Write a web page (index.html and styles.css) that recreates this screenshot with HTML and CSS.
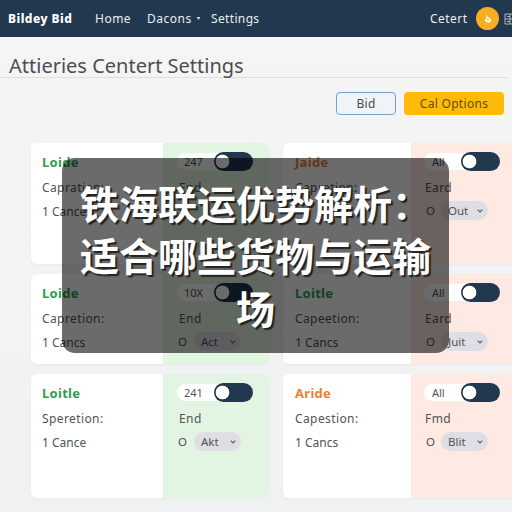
FILE: index.html
```
<!DOCTYPE html>
<html lang="en">
<head>
<meta charset="utf-8">
<title>Attieries Centert Settings</title>
<link rel="stylesheet" href="styles.css">
</head>
<body>
<nav class="nav">
  <span class="brand">Bildey Bid</span>
  <span class="home">Home</span>
  <span class="menu">Dacons</span>
  <svg class="caret" viewBox="0 0 5 5"><path d="M.5 1h4L2.5 4z" fill="#cbd5de"/></svg>
  <span class="settings">Settings</span>
  <span class="account">Cetert</span>
  <span class="avatar"><svg viewBox="0 0 23 23"><path d="M10 7.5l2 2.5 3 2.2v2.6l-2.3 1-2.8-.8-1.4-1.7 1.8-2z" fill="#fff8df"/><path d="M11 12.3l2 .7" stroke="#f9ad20"/></svg></span>
  <svg class="grid-icon" viewBox="0 0 12 12"><path d="M1 1h10v10H1zM1 6h10M6 1v10M3 3.5h3M3 8.5h3" fill="none" stroke="#a9b9c8" stroke-width="1"/></svg>
</nav>
<h1>Attieries Centert Settings</h1>
<div class="actions"><button class="bid">Bid</button><button class="options">Cal Options</button></div>
<main class="cards">
  <section class="card green">
    <div class="info"><h2>Loide</h2><p class="label">Capration:</p><p>1 Cances</p></div>
    <div class="side"><div class="switch"><span>247</span><i></i></div><p>End</p></div>
  </section>
  <section class="card peach">
    <div class="info"><h2 class="orange">Jaide</h2><p class="label">Capretion:</p></div>
    <div class="side"><div class="switch"><span>All</span><i></i></div><p>Eard</p><div class="pick"><b>O</b><span class="select">Out<svg viewBox="0 0 6 4"><path d="M.7.7L3 3 5.3.7"/></svg></span></div></div>
  </section>
  <section class="card green">
    <div class="info"><h2>Loide</h2><p class="label">Capretion:</p><p>1 Cancs</p></div>
    <div class="side"><div class="switch"><span>10X</span><i></i></div><p>End</p><div class="pick"><b>O</b><span class="select">Act<svg viewBox="0 0 6 4"><path d="M.7.7L3 3 5.3.7"/></svg></span></div></div>
  </section>
  <section class="card peach">
    <div class="info"><h2>Loitle</h2><p class="label">Capeetion:</p><p>1 Cancs</p></div>
    <div class="side"><div class="switch"><span>All</span><i></i></div><p>Eard</p><div class="pick"><b>O</b><span class="select">Juit<svg viewBox="0 0 6 4"><path d="M.7.7L3 3 5.3.7"/></svg></span></div></div>
  </section>
  <section class="card green">
    <div class="info"><h2>Loitle</h2><p class="label">Speretion:</p><p>1 Cance</p></div>
    <div class="side"><div class="switch"><span>241</span><i></i></div><p>End</p><div class="pick"><b>O</b><span class="select">Akt<svg viewBox="0 0 6 4"><path d="M.7.7L3 3 5.3.7"/></svg></span></div></div>
  </section>
  <section class="card peach">
    <div class="info"><h2 class="orange">Aride</h2><p class="label">Capestion:</p><p>1 Cancs</p></div>
    <div class="side"><div class="switch"><span>All</span><i></i></div><p>Fmd</p><div class="pick"><b>O</b><span class="select">Blit<svg viewBox="0 0 6 4"><path d="M.7.7L3 3 5.3.7"/></svg></span></div></div>
  </section>
</main>
<div class="overlay" lang="zh-CN"><div>铁海联运优势解析：</div><div>适合哪些货物与运输</div><div>场</div></div>
</body>
</html>
```
FILE: styles.css
```
* { box-sizing: border-box; }
body {
  margin: 0;
  width: 512px;
  height: 512px;
  overflow: hidden;
  position: relative;
  background: linear-gradient(#f5f5f5, #f4f4f5 30%, #eff1f3);
  color: #505357;
  font-family: "Noto Sans", "Noto Sans CJK SC", sans-serif;
}
.nav {
  height: 37px;
  padding-left: 8px;
  display: flex;
  align-items: center;
  background: #22384f;
  color: #e9eef2;
  font-size: 12px;
  white-space: nowrap;
}
.nav > * { flex: none; }
.nav span { line-height: 38px; }
.brand { width: 87px; font-weight: 800; color: #fff; letter-spacing: .45px; }
.home { width: 52px; letter-spacing: .5px; }
.menu { width: 49px; letter-spacing: .5px; }
.caret { width: 5px; height: 5px; margin-right: 10px; }
.settings { width: 219px; letter-spacing: .35px; }
.account { width: 46px; letter-spacing: .45px; }
.avatar { width: 23px; height: 23px; border-radius: 50%; background: #f9ad20; display: flex; }
.avatar svg { width: 23px; height: 23px; }
.grid-icon { width: 12px; height: 12px; margin-left: 5px; }
h1 {
  margin: 0 4px 0 0;
  height: 41px;
  padding: 15px 0 0 9px;
  border-bottom: 1px solid #dfdfe1;
  font-size: 20px;
  line-height: 28px;
  font-weight: 400;
  letter-spacing: 0;
  color: #4c4e51;
  white-space: nowrap;
}
.actions { display: flex; gap: 8px; margin: 14px 8px 0 336px; height: 23px; }
button { height: 23px; padding: 0; border-radius: 4px; font: 12px/21px "Noto Sans", sans-serif; letter-spacing: .3px; }
.bid { width: 60px; background: #f0f3f7; border: 1px solid #75a1ca; color: #484b50; }
.options { width: 100px; background: #ffbb08; border: 0; color: #664a16; }
.cards {
  display: grid;
  grid-template-columns: 238px 242px;
  grid-template-rows: 121px 90px 124px;
  gap: 10px 14px;
  margin: 28px 0 0 31px;
}
.card { display: flex; border-radius: 6px; overflow: hidden; background: #fff; box-shadow: 0 1px 3px #0000000a; }
.info { width: 132px; padding: 8px 0 0 11px; }
.peach .info { width: 128px; padding-left: 12px; }
h2 { margin: 0 0 5px; font-size: 13px; line-height: 22px; font-weight: 700; letter-spacing: .3px; color: #2f9d4b; }
h2.orange { color: #ee8030; }
p { margin: 0; font-size: 12px; line-height: 20px; height: 23.5px; white-space: nowrap; }
.label { letter-spacing: .4px; }
.side { flex: 1; padding: 9px 0 0 14px; background: #e2f5e2; }
.peach .side { padding-left: 13px; background: #ffeae3; }
.peach { border-radius: 6px 0 0 6px; }
.switch { display: flex; align-items: center; height: 19px; margin-bottom: 7px; font-size: 11px; }
.switch span { width: 44px; height: 17px; margin-right: -7px; padding-left: 7px; border-radius: 9px 0 0 9px; background: #fff; line-height: 18px; }
.peach .switch span { padding-left: 8px; }
.switch i { width: 39px; height: 19px; border-radius: 10px; background: radial-gradient(circle at 8.5px 9.5px, #fff 6.5px, #22384f 7.2px); }
.side p { padding-left: 2px; letter-spacing: .4px; }
.peach .side p { padding-left: 1px; }
.pick { display: flex; align-items: center; height: 19px; padding-left: 1px; font-size: 11.5px; margin-top: -1px; }
.peach .pick { padding-left: 2px; }
.pick b { width: 16px; font-weight: 400; }
.peach .pick b { width: 15px; }
.select { display: flex; align-items: center; justify-content: space-between; width: 47px; height: 19px; padding: 0 5px 0 7px; border-radius: 10px; background: #dedee4; line-height: 19px; }
.select svg { width: 6px; height: 4px; margin-top: 1px; fill: none; stroke: #5d6068; stroke-width: 1.1; }
.overlay {
  position: absolute;
  left: 62px;
  top: 158px;
  width: 387px;
  height: 195px;
  padding-top: 18px;
  border-radius: 13px;
  background: rgba(0, 0, 0, .58);
  color: #fff;
  font: 700 39px/52.4px "Noto Sans CJK SC", sans-serif;
  text-align: center;
  text-shadow: 2px 2px 1px #222;
  white-space: nowrap;
}
```
